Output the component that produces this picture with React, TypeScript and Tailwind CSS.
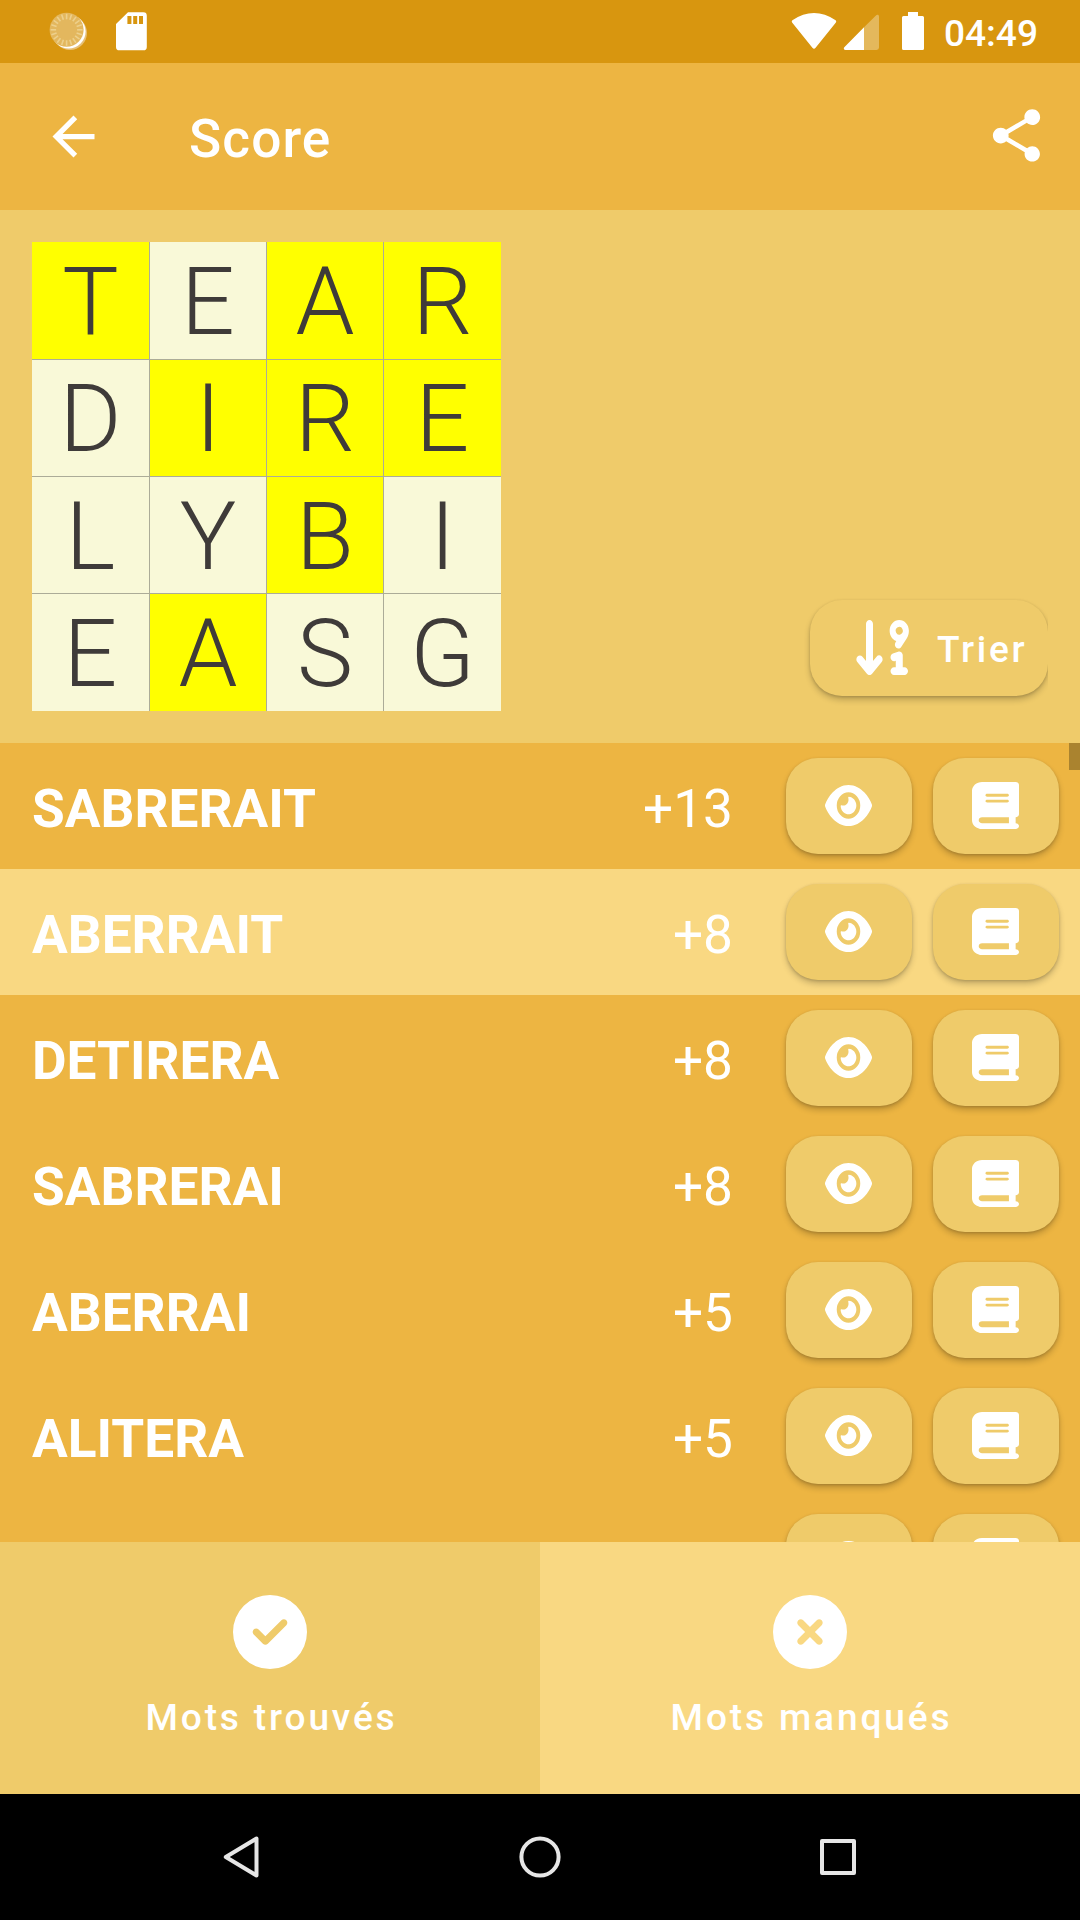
import { FaArrowDown91, FaBook, FaCircleCheck, FaCircleXmark, FaEye } from "react-icons/fa6";
import { MdArrowBack, MdShare } from "react-icons/md";

const letters = ["TEAR", "DIRE", "LYBI", "EASG"];
const highlighted = ["1011", "0111", "0010", "0100"];

const words = [
  { word: "SABRERAIT", score: 13 },
  { word: "ABERRAIT", score: 8, selected: true },
  { word: "DETIRERA", score: 8 },
  { word: "SABRERAI", score: 8 },
  { word: "ABERRAI", score: 5 },
  { word: "ALITERA", score: 5 },
  { word: "", score: 0 },
];

const buttonShadow =
  "shadow-[0_4px_6px_rgba(0,0,0,0.2),0_1px_3px_rgba(0,0,0,0.16)]";

function SpinnerIcon() {
  const spokes = Array.from({ length: 20 }, (_, i) => i * 18);
  return (
    <svg width="40" height="40" viewBox="48 10 40 40">
      <circle cx="70" cy="33" r="17" fill="#e6c078" />
      <circle cx="68.6" cy="31.6" r="17" fill="#fff" />
      <circle cx="66.6" cy="29.8" r="17" fill="#e3b75e" />
      {spokes.map((a) => (
        <path key={a} d="M66.6 13.8v5.5" stroke="#edd08c" strokeWidth="1.6" transform={`rotate(${a} 66.6 29.8)`} />
      ))}
    </svg>
  );
}

function StatusBar() {
  return (
    <div className="flex h-[63px] items-start bg-[#d8960f] pl-12 pt-[10px]">
      <SpinnerIcon />
      <svg className="ml-[28px]" width="32" height="42" viewBox="116 10 32 42">
        <path
          fill="#fff"
          fillRule="evenodd"
          d="M128 12.3h15.4a3.4 3.4 0 0 1 3.4 3.4v31.2a3.4 3.4 0 0 1-3.4 3.4h-24a3.4 3.4 0 0 1-3.4-3.4V24zM127.4 16v8h4v-8zM133.2 16v8h4v-8zM139 16v8h4v-8z"
        />
      </svg>
      <div className="flex-1" />
      <svg className="mr-[20px]" width="134" height="42" viewBox="790 10 134 42">
        <path fill="#fff" d="M792.3 22.8c-.9-1.2-.6-2 .5-2.8C806 10.8 822 10.8 835.2 20c1.1.8 1.4 1.6.5 2.8L815.6 47.8q-1.6 2-3.2 0z" />
        <path fill="#e4b85c" d="M864 27.2V50h12.6a2.4 2.4 0 0 0 2.4-2.4V16.5c0-1.8-1.6-2.4-2.8-1.2z" />
        <path fill="#fff" d="M864 27.2V50h-18.5c-1.6 0-2.2-1.8-1.2-2.8z" />
        <path fill="#fff" d="M908 12h10v4h4.5a1.5 1.5 0 0 1 1.5 1.5v31a1.5 1.5 0 0 1-1.5 1.5h-19a1.5 1.5 0 0 1-1.5-1.5v-31a1.5 1.5 0 0 1 1.5-1.5h4.5z" />
      </svg>
      <span className="mr-[42px] mt-[2px] text-[37.1px] font-medium leading-[43px]">04:49</span>
    </div>
  );
}

function AppBar() {
  return (
    <header className="flex h-[147px] items-center bg-[#edb542] pl-[42px] pr-8">
      <MdArrowBack size={63} />
      <h1 className="ml-[84px] mt-[4px] flex-1 text-[53.2px] font-medium leading-[60px] tracking-[1.1px]">Score</h1>
      <MdShare size={63} className="-mt-[2px]" />
    </header>
  );
}

function Board() {
  return (
    <div className="grid grid-cols-[117px_117px_117px_118px] grid-rows-[117px_117px_117px_118px]">
      {letters.flatMap((row, y) =>
        [...row].map((letter, x) => (
          <div
            key={`${x}-${y}`}
            className={`flex items-center justify-center border-[#acac98] text-[94.5px] font-light leading-none text-[#3f3b39] ${
              x > 0 ? "border-l" : ""
            } ${y > 0 ? "border-t" : ""} ${highlighted[y][x] === "1" ? "bg-[#ffff00]" : "bg-[#f9f9d8]"}`}
          >
            <span className={y === 2 ? "mt-[5px]" : "mt-[3px]"}>{letter}</span>
          </div>
        )),
      )}
    </div>
  );
}

function BoardPanel() {
  return (
    <section className="flex h-[533px] items-start bg-[#efcb6a] px-8 pt-8">
      <Board />
      <div className="flex h-[469px] flex-1 items-end justify-end overflow-x-clip pb-[15px]">
        <button
          className={`flex h-24 w-[238px] items-center rounded-[32px] bg-[#efcb6a] pl-[42px] ${buttonShadow}`}
        >
          <FaArrowDown91 className="mb-px h-[63px] w-[63px] shrink-0" preserveAspectRatio="none" />
          <span className="ml-[22px] mt-[3px] text-[37.1px] font-medium leading-[44px] tracking-[2.7px]">Trier</span>
        </button>
      </div>
    </section>
  );
}

function WordRow({ word, score, selected }: { word: string; score: number; selected?: boolean }) {
  const button = `flex h-24 w-[126px] items-center justify-center rounded-[32px] bg-[#efcb6a] ${buttonShadow}`;
  return (
    <li className={`flex h-[126px] shrink-0 items-center pl-8 pr-[21px] ${selected ? "bg-[#f9d882]" : "bg-[#edb542]"}`}>
      <span className="mt-[6px] flex-1 text-[53.2px] font-bold leading-[60px]">{word}</span>
      <span className="mr-[53px] mt-[6px] text-[53.2px] leading-[60px]">{word && `+${score}`}</span>
      <button className={button} aria-label="Voir">
        <FaEye className="mb-px mr-px h-[47px] w-[47px]" preserveAspectRatio="none" />
      </button>
      <button className={`ml-[21px] ${button}`} aria-label="Définition">
        <FaBook className="mb-px mr-px h-[47px] w-[47px]" preserveAspectRatio="none" />
      </button>
    </li>
  );
}

function WordList() {
  return (
    <section className="relative h-[799px] overflow-hidden bg-[#edb542]">
      <ul className="flex flex-col">
        {words.map((w, i) => (
          <WordRow key={i} {...w} />
        ))}
      </ul>
      <div className="absolute right-0 top-0 h-[27px] w-[11px] bg-[#aa832f]" />
    </section>
  );
}

function Tabs() {
  const label = "mt-[27px] pl-[3px] text-[37.1px] font-medium leading-[44px] tracking-[2.85px]";
  return (
    <nav className="grid h-[252px] grid-cols-2">
      <button className="flex flex-col items-center bg-[#efcb6a] pt-[53px]">
        <FaCircleCheck size={74} />
        <span className={label}>Mots trouvés</span>
      </button>
      <button className="flex flex-col items-center bg-[#f9d882] pt-[53px]">
        <FaCircleXmark size={74} />
        <span className={label}>Mots manqués</span>
      </button>
    </nav>
  );
}

function SystemNav() {
  const stroke = { fill: "none", stroke: "#e6e6e6", strokeWidth: 4, strokeLinejoin: "round" as const };
  return (
    <div className="flex h-[126px] items-center bg-black pl-[220px] pr-[218px]">
      <svg width="44" height="44" viewBox="0 0 44 44">
        <path d="M36.5 3.5v37L5.8 22z" {...stroke} />
      </svg>
      <div className="flex-1" />
      <svg className="ml-[2px]" width="44" height="44" viewBox="0 0 44 44">
        <circle cx="22" cy="22" r="18.6" {...stroke} />
      </svg>
      <div className="flex-1" />
      <svg width="48" height="44" viewBox="0 0 48 44">
        <rect x="8" y="6" width="32" height="32" {...stroke} />
      </svg>
    </div>
  );
}

export default function App() {
  return (
    <main className="h-[1920px] w-[1080px] overflow-hidden text-white [font-family:Roboto,sans-serif]">
      <StatusBar />
      <AppBar />
      <BoardPanel />
      <WordList />
      <Tabs />
      <SystemNav />
    </main>
  );
}
